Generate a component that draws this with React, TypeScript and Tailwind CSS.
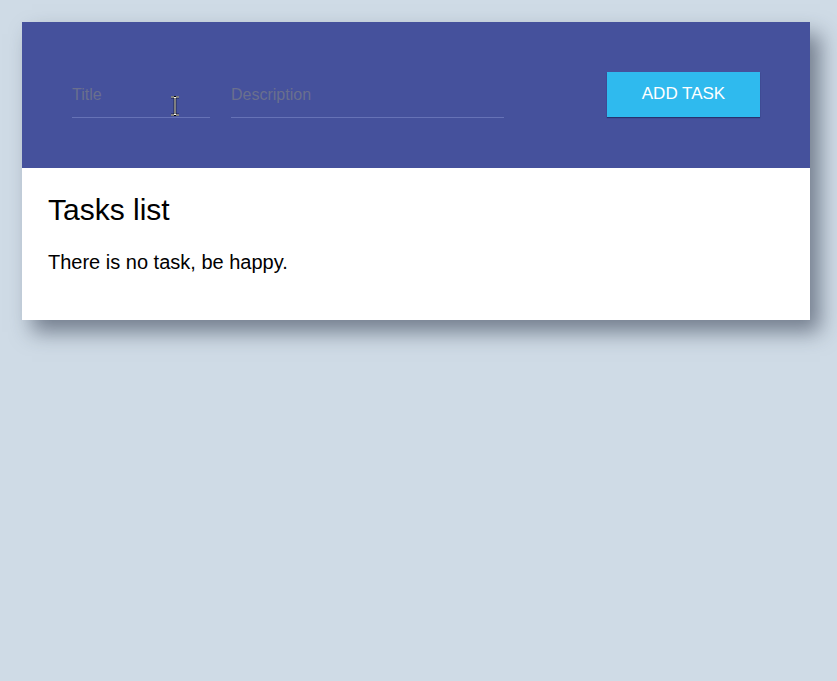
const App = () => {
  return (
    <div className="min-h-[681px] w-full bg-[#cfdbe6] pt-[22px] pl-[22px] font-['Liberation_Sans',Arial,sans-serif]">
      <div className="w-[788px] bg-white shadow-[10px_12px_20px_rgba(40,50,70,0.55)]">
        <div className="relative flex h-[146px] items-center bg-[#45519c] px-[50px]">
          <div className="flex h-[45px] items-end gap-[21px]">
            <input
              placeholder="Title"
              className="w-[138px] border-b border-[#6672b6] bg-transparent pb-[12px] text-[16px] leading-[20px] text-white outline-none placeholder:text-[#6a6f8e]"
            />
            <input
              placeholder="Description"
              className="w-[273px] border-b border-[#6672b6] bg-transparent pb-[12px] text-[16px] leading-[20px] text-white outline-none placeholder:text-[#6a6f8e]"
            />
          </div>
          <button className="ml-auto mb-[2px] h-[45px] w-[153px] bg-[#2fbaee] text-[17px] text-white shadow-[0_1px_1px_rgba(20,30,80,0.6)]">
            ADD TASK
          </button>
          <svg className="absolute left-[148px] top-[74px]" width="10" height="20" viewBox="0 0 10 20">
            <path d="M1 1h3l1 1 1-1h3M5 2v16M1 19h3l1-1 1 1h3" stroke="#000" strokeWidth="2.5" fill="none" />
            <path d="M1 1h3l1 1 1-1h3M5 2v16M1 19h3l1-1 1 1h3" stroke="#fff" strokeWidth="1" fill="none" />
          </svg>
        </div>
        <div className="px-[26px] pt-[25px] pb-[46px] text-black">
          <h2 className="text-[30px] leading-[34px]">Tasks list</h2>
          <p className="mt-[23px] text-[20px] leading-[24px]">There is no task, be happy.</p>
        </div>
      </div>
    </div>
  );
};

export default App;
